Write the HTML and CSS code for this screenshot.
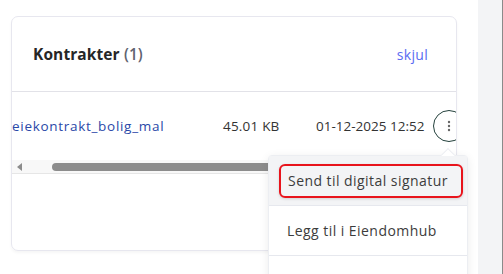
FILE: index.html
```html
<!DOCTYPE html>
<html lang="no">
<head>
<meta charset="utf-8">
<link rel="stylesheet" href="styles.css">
</head>
<body>
<div class="page">
  <main class="main">
    <section class="card">
      <header class="card-head">
        <h2 class="title">Kontrakter <span class="count">(1)</span></h2>
        <a class="toggle">skjul</a>
      </header>
      <div class="table-wrap">
        <div class="row">
          <span class="cell name">eiekontrakt_bolig_mal</span>
          <span class="cell size">45.01 KB</span>
          <span class="cell date">01-12-2025 12:52</span>
          <span class="cell act"><button class="more"><svg width="4" height="12" viewBox="0 0 4 12"><circle cx="2" cy="2" r="1.2"/><circle cx="2" cy="6" r="1.2"/><circle cx="2" cy="10" r="1.2"/></svg></button></span>
        </div>
        <div class="hscroll">
          <span class="arrow"></span>
          <span class="thumb"></span>
        </div>
      </div>
    </section>
    <div class="menu">
      <span class="notch"></span>
      <div class="item active"><span class="focus">Send til digital signatur</span></div>
      <div class="item"><span class="label">Legg til i Eiendomhub</span></div>
      <div class="item"><span class="label">Last ned</span></div>
    </div>
  </main>
  <aside class="side"></aside>
</div>
</body>
</html>
```
FILE: styles.css
```css
* { box-sizing: border-box; }
html, body { margin: 0; padding: 0; background: #fff; }
body {
  font-family: "Open Sans", "Liberation Sans", sans-serif;
  color: #333;
  width: 503px; height: 274px; overflow: hidden;
}
.page { display: flex; height: 274px; }
.main {
  position: relative;
  width: 478px;
  padding: 16px 0 0 11px;
}
.side {
  width: 25px;
  background: #f3f4f6;
  border-right: 1px solid #8a8a8a;
}
.card {
  width: 446px;
  height: 235px;
  border: 1px solid #e7e7ef;
  border-radius: 7px;
  box-shadow: 0 2px 3px rgba(0,0,0,0.04);
  overflow: hidden;
}
.card-head {
  height: 75px;
  display: flex;
  align-items: center;
  justify-content: space-between;
  padding: 0 28px 0 21px;
  border-bottom: 1px solid #e2e2e8;
}
.title {
  margin: 0;
  font-size: 15.5px;
  font-weight: 700;
  color: #262626;
  letter-spacing: 0.1px;
}
.count { font-weight: 600; color: #5f6370; }
.toggle { color: #5a6cf2; font-size: 14px; letter-spacing: 0.3px; }
.table-wrap { overflow: hidden; }
.row {
  display: flex;
  align-items: center;
  height: 68px;
  font-size: 13.5px;
  white-space: nowrap;
}
.cell { flex: none; }
.name { color: #2a48a8; width: 211px; letter-spacing: 0.7px; }
.size { color: #333; width: 93px; letter-spacing: 0.2px; }
.date { color: #333; width: 117px; }
.more {
  width: 32px; height: 32px;
  border-radius: 50%;
  border: 1px solid #24413c;
  background: #fff;
  display: flex; align-items: center; justify-content: center;
  padding: 0;
  fill: #666;
}
.hscroll {
  height: 14px;
  background: #f8f8f8;
  display: flex;
  align-items: center;
  border-bottom: 1px solid #e6e6e6;
  padding-left: 5px;
}
.arrow {
  width: 0; height: 0;
  border-top: 4px solid transparent;
  border-bottom: 4px solid transparent;
  border-right: 5px solid #8c8c8c;
}
.thumb {
  margin-left: 30px;
  width: 400px;
  height: 8px;
  border-radius: 4px;
  background: #8c8c8c;
}
.menu {
  position: absolute;
  left: 268px;
  top: 155px;
  width: 200px;
  background: #fff;
  border: 1px solid #eceef2;
  border-radius: 4px;
  box-shadow: 0 2px 10px rgba(0,0,0,0.08);
}
.notch {
  position: absolute;
  top: -6px; right: 14px;
  width: 10px; height: 10px;
  background: #fff;
  border-left: 1px solid #eceef2;
  border-top: 1px solid #eceef2;
  transform: rotate(45deg);
}
.item {
  height: 50px;
  display: flex;
  align-items: center;
  border-bottom: 1px solid #e6e8ee;
  font-size: 14px;
  color: #3c3c3c;
  white-space: nowrap;
  letter-spacing: 0.45px;
}
.item.active {
  position: relative;
  background: #f3f4f6;
  padding: 0 4px 0 10px;
}
.focus {
  flex: 1;
  height: 34px;
  display: flex; align-items: center;
  padding-left: 7px;
  border: 2px solid #e8141c;
  border-radius: 6px;
  box-shadow: 0 1px 3px rgba(0,0,0,0.15);
}
.label { padding-left: 18px; }
```
